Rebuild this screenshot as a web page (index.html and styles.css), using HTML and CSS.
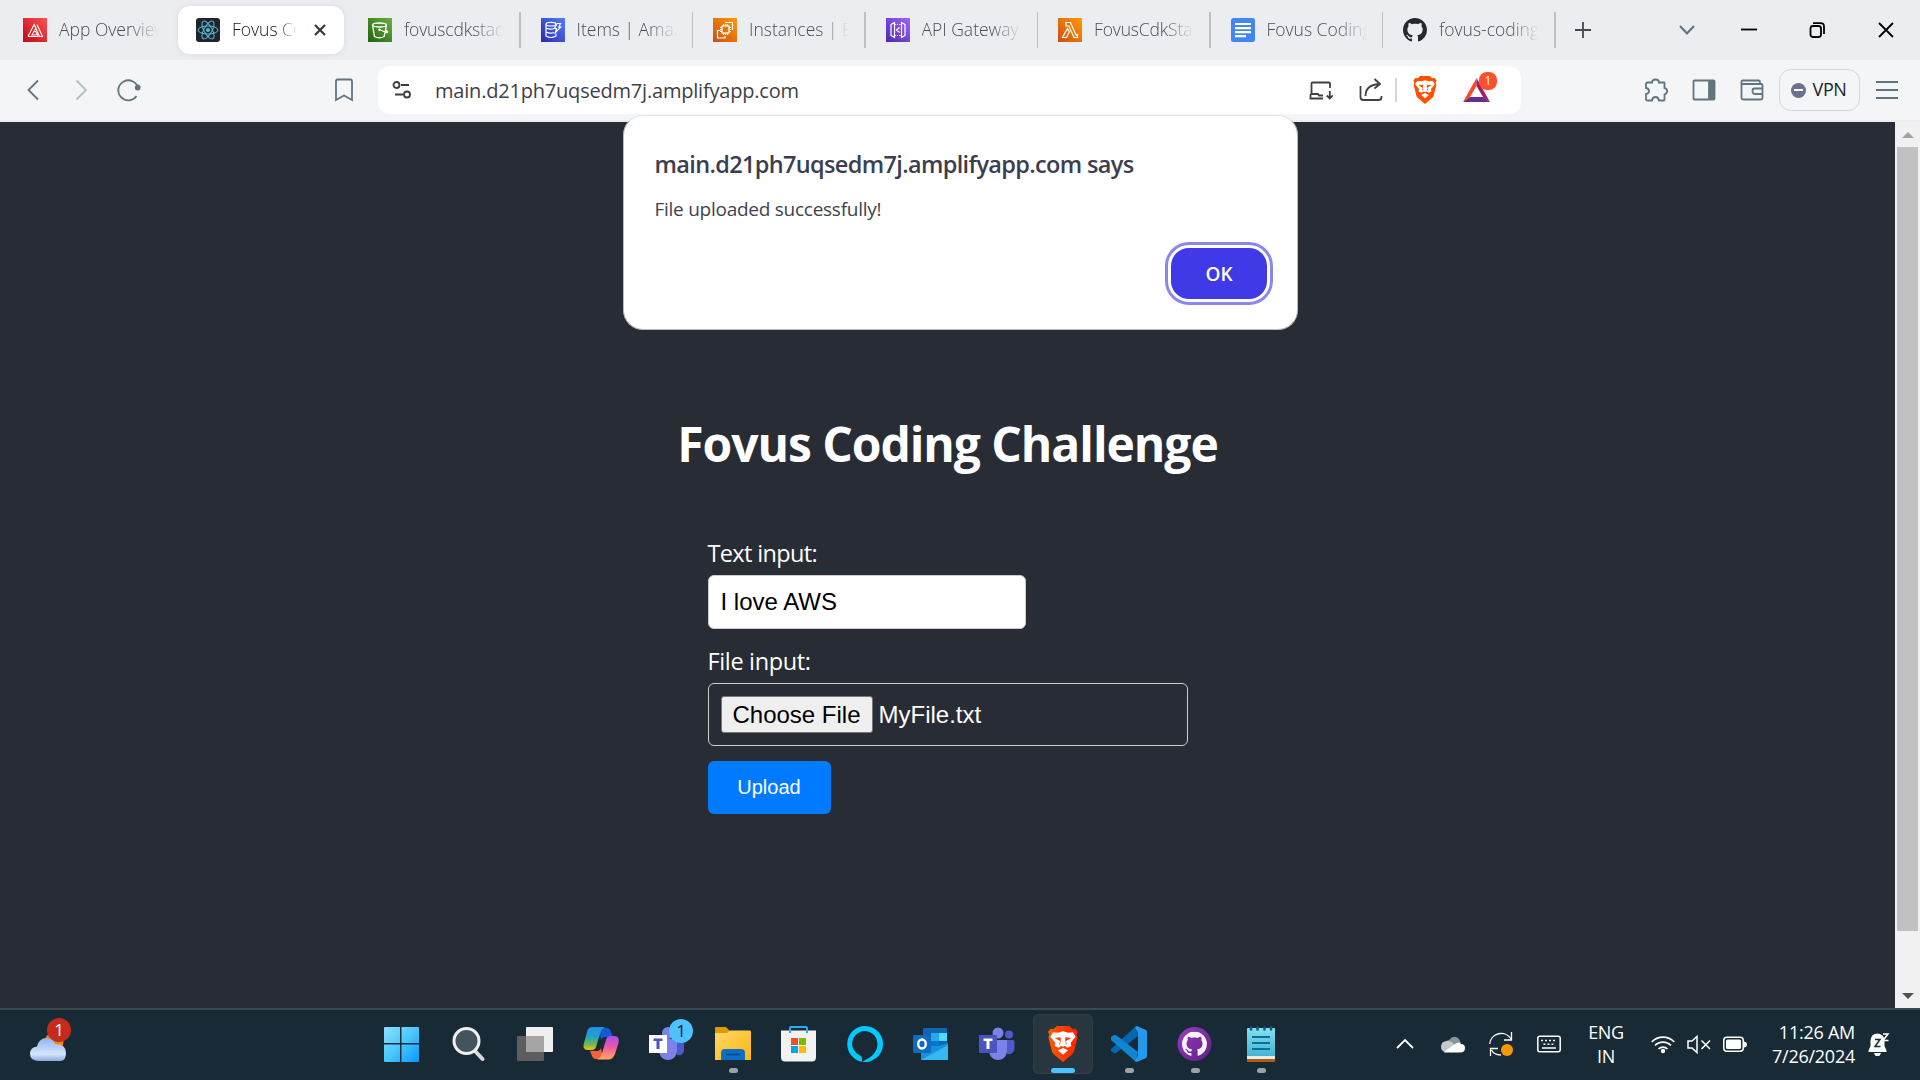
FILE: index.html
```html
<!DOCTYPE html>
<html lang="en">
<head>
<meta charset="utf-8">
<title>Fovus Coding Challenge</title>
<link rel="stylesheet" href="styles.css">
</head>
<body>
<svg class="defs" aria-hidden="true">
  <defs>
    <linearGradient id="g-red" x1="0" y1="1" x2="1" y2="0"><stop offset="0" stop-color="#bd0816"/><stop offset="1" stop-color="#ff5252"/></linearGradient>
    <linearGradient id="g-green" x1="0" y1="1" x2="1" y2="0"><stop offset="0" stop-color="#1b660f"/><stop offset="1" stop-color="#6cae3e"/></linearGradient>
    <linearGradient id="g-blue" x1="0" y1="1" x2="1" y2="0"><stop offset="0" stop-color="#2e27ad"/><stop offset="1" stop-color="#527fff"/></linearGradient>
    <linearGradient id="g-orange" x1="0" y1="1" x2="1" y2="0"><stop offset="0" stop-color="#c8511b"/><stop offset="1" stop-color="#ff9900"/></linearGradient>
    <linearGradient id="g-purple" x1="0" y1="1" x2="1" y2="0"><stop offset="0" stop-color="#4d27a8"/><stop offset="1" stop-color="#a166ff"/></linearGradient>
    <linearGradient id="g-win" x1="0" y1="0" x2="1" y2="1"><stop offset="0" stop-color="#8be0ff"/><stop offset=".5" stop-color="#48c8fb"/><stop offset="1" stop-color="#0c94fb"/></linearGradient>
    <linearGradient id="g-cloud" x1="0" y1="0" x2="0" y2="1"><stop offset="0" stop-color="#8fb2f0"/><stop offset=".7" stop-color="#d5e5fb"/><stop offset="1" stop-color="#8aa8e0"/></linearGradient>
    <linearGradient id="g-cop1" x1="0" y1="0" x2="0" y2="1"><stop offset="0" stop-color="#1f8fe8"/><stop offset=".45" stop-color="#23a5c0"/><stop offset=".75" stop-color="#72b84e"/><stop offset="1" stop-color="#f0c419"/></linearGradient>
    <linearGradient id="g-cop2" x1="0" y1="0" x2="0" y2="1"><stop offset="0" stop-color="#a64df0"/><stop offset=".5" stop-color="#ee5ca0"/><stop offset="1" stop-color="#ffab5c"/></linearGradient>
    <linearGradient id="g-folder" x1="0" y1="0" x2="1" y2="1"><stop offset="0" stop-color="#ffd769"/><stop offset="1" stop-color="#fcb80e"/></linearGradient>
    <linearGradient id="g-lion" x1="0" y1="0" x2="1" y2="0"><stop offset="0" stop-color="#ff5a00"/><stop offset="1" stop-color="#ff2100"/></linearGradient>
    <linearGradient id="g-git" x1="0" y1="0" x2="1" y2="1"><stop offset="0" stop-color="#9a3cc0"/><stop offset="1" stop-color="#5c1f84"/></linearGradient>
    <linearGradient id="g-note" x1="0" y1="0" x2="0" y2="1"><stop offset="0" stop-color="#85e0f0"/><stop offset="1" stop-color="#43b4d4"/></linearGradient>
  </defs>
  <symbol id="lion" viewBox="0 0 90 108">
    <path d="M26 0H64L73 9L82 8L90 17L86 26L89 34L78 77Q76 82 71 86L45 108L19 86Q14 82 12 77L1 34L4 26L0 17L8 8L17 9Z"/>
    <path fill="#fff" d="M15 19L30 20L45 16L60 20L75 19L83 32L68 50L70 60L58 65L50 59L56 55L54 45L70 36L53 34L51 40L53 58L45 62L37 58L39 40L37 34L20 36L36 45L34 55L40 59L32 65L20 60L22 50L7 32Z"/>
    <path fill="#fff" d="M39 36L38 28H52L51 36L53 58L45 61L37 58ZM45 66L60 73L45 86L30 73Z"/>
  </symbol>
  <symbol id="octocat" viewBox="0 0 16 16">
    <path d="M8 0C3.58 0 0 3.58 0 8c0 3.54 2.29 6.53 5.47 7.59.4.07.55-.17.55-.38 0-.19-.01-.82-.01-1.49-2.01.37-2.53-.49-2.69-.94-.09-.23-.48-.94-.82-1.13-.28-.15-.68-.52-.01-.53.63-.01 1.08.58 1.23.82.72 1.21 1.87.87 2.33.66.07-.52.28-.87.51-1.07-1.78-.2-3.64-.89-3.64-3.95 0-.87.31-1.59.82-2.15-.08-.2-.36-1.02.08-2.12 0 0 .67-.21 2.2.82.64-.18 1.32-.27 2-.27s1.36.09 2 .27c1.53-1.04 2.2-.82 2.2-.82.44 1.1.16 1.92.08 2.12.51.56.82 1.27.82 2.15 0 3.07-1.87 3.75-3.65 3.95.29.25.54.73.54 1.48 0 1.07-.01 1.93-.01 2.2 0 .21.15.46.55.38A8.01 8.01 0 0 0 16 8c0-4.42-3.58-8-8-8z"/>
  </symbol>
</svg>

<header class="tabstrip">
  <div class="tab">
    <svg class="favicon" viewBox="0 0 24 24"><path fill="url(#g-red)" d="M0 0h24v24H0z"/><path fill="none" stroke="#fff" stroke-width="1.1" d="M5 18.5L11.2 6.5L13 10L9 17H14.5L11.5 11.5M14 6.5L19.5 18.5H16.5L12.2 9M5 18.5H15.5"/></svg>
    <span class="tab-title">App Overview</span>
  </div>
  <div class="tab tab-active">
    <svg class="favicon" viewBox="0 0 24 24"><rect width="24" height="24" rx="3" fill="#20232a"/><g fill="none" stroke="#53c1de" stroke-width="1"><ellipse cx="12" cy="12" rx="10" ry="4"/><ellipse cx="12" cy="12" rx="10" ry="4" transform="rotate(60 12 12)"/><ellipse cx="12" cy="12" rx="10" ry="4" transform="rotate(120 12 12)"/></g><circle cx="12" cy="12" r="2" fill="#53c1de"/></svg>
    <span class="tab-title">Fovus Coding</span>
    <svg class="tab-close" viewBox="0 0 12 12"><path d="M1 1L11 11M11 1L1 11"/></svg>
  </div>
  <div class="tab">
    <svg class="favicon" viewBox="0 0 24 24"><path fill="url(#g-green)" d="M0 0h24v24H0z"/><g fill="none" stroke="#fff" stroke-width="1.3"><ellipse cx="11.5" cy="7" rx="7" ry="2"/><path d="M4.500 7L6.500 18.500Q11.500 21 16.200 18.500L18.500 7M11.500 11.500L18 14.500Q20.500 15 19 13L17.500 12"/></g><circle cx="11.500" cy="11.800" r="1.200" fill="#fff"/></svg>
    <span class="tab-title tight">fovuscdkstack</span><i class="sep"></i>
  </div>
  <div class="tab">
    <svg class="favicon" viewBox="0 0 24 24"><path fill="url(#g-blue)" d="M0 0h24v24H0z"/><g fill="none" stroke="#fff" stroke-width="1.200"><ellipse cx="10" cy="6.200" rx="5" ry="1.800"/><path d="M5 6.200V18Q10 21 15 18V15.500M5 10Q9 12 13 10.500M5 14Q9 16 13.500 14.500M16 5.500H19.500L17.800 9H19.800L14.500 14.500L15.500 10.500H13.500Z"/></g></svg>
    <span class="tab-title">Items | Amazon</span><i class="sep"></i>
  </div>
  <div class="tab">
    <svg class="favicon" viewBox="0 0 24 24"><path fill="url(#g-orange)" d="M0 0h24v24H0z"/><g fill="none" stroke="#fff" stroke-width="1.200"><rect x="9" y="8" width="7" height="7"/><path d="M10.500 6V8M12.500 6V8M14.500 6V8M10.500 15v2M12.500 15v2M14.500 15v2M7 9.500h2M7 11.500h2M7 13.500h2M16 9.500h2M16 11.500h2M16 13.500h2M12 4.500H19.500V12M7.500 12.500H4.500V20H12V18"/></g></svg>
    <span class="tab-title">Instances | EC2</span><i class="sep"></i>
  </div>
  <div class="tab">
    <svg class="favicon" viewBox="0 0 24 24"><path fill="url(#g-purple)" d="M0 0h24v24H0z"/><g fill="none" stroke="#fff" stroke-width="1.200"><path d="M5 6.500L8.500 4.500V19.500L5 17.500ZM19 6.500L15.500 4.500V19.500L19 17.500ZM13.500 9.500L10.500 12L13.500 14.500"/><path stroke-dasharray="1.200 1.200" d="M8.500 6.500h7M8.500 17.500h7"/></g></svg>
    <span class="tab-title">API Gateway</span><i class="sep"></i>
  </div>
  <div class="tab">
    <svg class="favicon" viewBox="0 0 24 24"><path fill="url(#g-orange)" d="M0 0h24v24H0z"/><path fill="none" stroke="#fff" stroke-width="1.200" d="M8 4.500H12.500L18 17L19.500 16.500V19.500H16L10.800 8H8ZM9.500 10.500L11.300 14L8.500 19.500H4.500Z"/></svg>
    <span class="tab-title tight">FovusCdkStack</span><i class="sep"></i>
  </div>
  <div class="tab">
    <svg class="favicon" viewBox="0 0 24 24"><rect width="24" height="24" rx="2.500" fill="#4285f4"/><path stroke="#fff" stroke-width="2.200" d="M4 6H20M4 10.200H20M4 14.200H20M4 18.200H15"/></svg>
    <span class="tab-title">Fovus Coding</span><i class="sep"></i>
  </div>
  <div class="tab">
    <svg class="favicon" fill="#24292f"><use href="#octocat"/></svg>
    <span class="tab-title">fovus-coding-</span><i class="sep"></i>
  </div>
  <svg class="new-tab" viewBox="0 0 16 16"><path d="M8 0V16M0 8H16"/></svg>
  <div class="window-controls">
    <svg class="tab-search" viewBox="0 0 16 16"><path d="M1 4L8 11.500L15 4"/></svg>
    <svg viewBox="0 0 16 16"><path d="M0 7.500H16"/></svg>
    <svg viewBox="0 0 16 16"><rect x="1.500" y="4" width="10.500" height="11" rx="2.500"/><path d="M4 1.200H11.500Q15 1.200 15 4.500V12"/></svg>
    <svg viewBox="0 0 16 16"><path d="M1 1L15 15M15 1L1 15"/></svg>
  </div>
</header>

<nav class="toolbar">
  <div class="nav-buttons">
    <svg viewBox="0 0 24 24"><path d="M17 2.500L7.500 12L17 21.500"/></svg>
    <svg class="disabled" viewBox="0 0 24 24"><path d="M7.500 2.500L17 12L7.500 21.500"/></svg>
    <svg viewBox="0 0 24 24"><path d="M21 10A10 10 0 1 0 19.500 18"/><circle cx="20.700" cy="9.500" r="2" fill="#62757e"/></svg>
  </div>
  <svg class="bookmark" viewBox="0 0 24 24"><path d="M4 3Q4 1.500 5.500 1.500H18.500Q20 1.500 20 3V22L12 17.500L4 22Z"/></svg>
  <div class="address">
    <svg class="tune" viewBox="0 0 20 20"><circle cx="4.500" cy="5" r="3"/><path d="M9 5H17M3 14.500H11"/><circle cx="15" cy="14.500" r="3"/></svg>
    <span class="url">main.d21ph7uqsedm7j.amplifyapp.com</span>
    <svg class="act install" viewBox="0 0 24 24"><path d="M14 20.500H1.500V17L2.500 15.500V5.500Q2.500 4.500 3.500 4.500H20Q21 4.500 21 5.500V10M2.500 16H9L10 17.500H14M20.800 13V20M17.800 17.500L20.800 20.500L23.800 17.500"/></svg>
    <svg class="act share" viewBox="0 0 24 24"><path d="M1.500 8V19Q1.500 22 4.500 22H19.500Q22.500 22 22.500 19V18M6.500 18Q6.500 7 20 6M15.500 1L21 6L15.500 10.500"/></svg>
    <i class="bar-divider"></i>
    <svg class="shield" fill="#fb542b"><use href="#lion"/></svg>
    <div class="rewards">
      <svg viewBox="0 0 27 24"><path fill="#ff4724" d="M13.500 0V8L7 19L0 24Z"/><path fill="#9e1f63" d="M13.500 0V8L20 19L27 24Z"/><path fill="#662d91" d="M0 24L7 19H20L27 24Z"/></svg>
      <b class="reward-badge">1</b>
    </div>
  </div>
  <div class="extensions">
    <svg viewBox="0 0 24 24"><path d="M3.500 4.500H8Q8 1.500 11.500 1.500T15 4.500H20Q20.500 4.500 20.500 5V10Q23.200 10.500 23.200 13T20.500 16.500V21.500Q20.500 22.500 19.500 22.500H15Q14.500 19 11.500 19T8 22.500H3.500Q2 22.500 2 21V16Q5 15.500 5 13T2 10V6Q2 4.500 3.500 4.500Z"/></svg>
    <svg viewBox="0 0 24 24"><rect x="1.500" y="2.500" width="21" height="19" rx="1"/><path fill="#62757e" d="M17 3h5v18h-5z"/></svg>
    <svg viewBox="0 0 24 24"><path d="M1.500 3.500V20Q1.500 21.500 3 21.500H21Q22.500 21.500 22.500 20V7.500Q22.500 6 21 6H3Q1.500 6 1.500 4.200T3 2.500H18.500Q20 2.500 20 4V6M22.500 10.500H14.500Q12.500 10.500 12.500 13T14.500 16H22.500"/></svg>
  </div>
  <div class="vpn"><i class="vpn-dot"></i><span>VPN</span></div>
  <svg class="menu" viewBox="0 0 24 24"><path d="M1 4H23M1 12H23M1 20H23"/></svg>
</nav>

<div class="viewport">
  <main class="page">
    <h1 class="title">Fovus Coding Challenge</h1>
    <form class="form">
      <label class="label label-text" for="txt">Text input:</label>
      <input class="text-input" id="txt" type="text" value="I love AWS">
      <div class="label">File input:</div>
      <div class="file-input"><button class="choose" type="button">Choose File</button><span>MyFile.txt</span></div>
      <button class="upload" type="button">Upload</button>
    </form>
  </main>
  <div class="scrollbar"><i class="arrow-up"></i><i class="thumb"></i><i class="arrow-down"></i></div>
</div>

<div class="dialog" role="alertdialog">
  <h2 class="dialog-title">main.d21ph7uqsedm7j.amplifyapp.com says</h2>
  <p class="dialog-text">File uploaded successfully!</p>
  <button class="ok" type="button">OK</button>
</div>

<footer class="taskbar">
  <div class="weather">
    <svg viewBox="0 0 36 28"><circle cx="24" cy="9" r="9.500" fill="#f5820b"/><path fill="url(#g-cloud)" d="M9 28Q0 28 0 21T7 13.500Q9 5 16.500 5T25 11Q36 11 36 20T28 28Z"/></svg>
    <b class="weather-badge">1</b>
  </div>
  <div class="apps">
    <div class="app"><svg class="start" viewBox="0 0 36 36"><path fill="url(#g-win)" d="M1 1H16V17H0V2Q0 1 1 1ZM17.500 1H34Q35 1 35 2V17H17.500ZM0 18.500H16V36H1Q0 36 0 35ZM17.500 18.500H35V35Q35 36 34 36H17.500Z"/></svg></div>
    <div class="app"><svg viewBox="0 0 36 36"><path stroke="#d9dadb" stroke-width="4" stroke-linecap="round" d="M24 25L31.500 33"/><circle cx="15.500" cy="15" r="12.500" fill="#43545d" stroke="#f0f0f0" stroke-width="3"/></svg></div>
    <div class="app"><svg viewBox="0 0 36 36"><rect x="9" y="1" width="27" height="25" rx="1" fill="#efefef"/><rect y="10" width="27" height="25" rx="1" fill="#5d5d5d"/><path fill="#a5a5a5" d="M9 10h18v16H9z"/></svg></div>
    <div class="app"><svg viewBox="0 0 36 36"><path fill="#1458d4" d="M16 2H24Q27 2 28 6L30 11H22Q19 11 18 14Z"/><path fill="#f4633c" d="M7 25H14Q17 25 18 22L20 33H13Q10 33 9 30Z"/><path fill="url(#g-cop1)" d="M9 1H22Q18 3 17 8L13 21Q12 24 9 24H5Q-1 24 1 17L4 6Q5 1 9 1Z"/><path fill="url(#g-cop2)" d="M27 10H31Q37 10 35.500 17L32 28Q30 33.500 25 33.500H14Q18 32 19 27L23 14Q24 10 27 10Z"/></svg></div>
    <div class="app app-badged"><svg viewBox="0 0 36 36"><circle cx="19" cy="7" r="6" fill="#7b83eb"/><path fill="#5059c9" d="M25 12h10V25Q34 30 28 29Z"/><path fill="#7b83eb" d="M10 13H28V26Q26 34 19 34T10 26Z"/><path fill="#fff" d="M0 9h18v18H0z"/><path fill="#4b53bc" d="M4.500 12.500h9v2.600H10.500V23H7.500V15.100H4.500Z"/></svg><b class="app-count">1</b></div>
    <div class="app app-open"><svg viewBox="0 0 36 36"><path fill="#dc9b06" d="M0 2Q0 1 1 1H11L15 5V9H0Z"/><path fill="url(#g-folder)" d="M0 7H12L15 4.500H35Q36 4.500 36 6V34H0Z"/><path fill="#0c6fc4" d="M6 34V27Q6 23 10 23H26Q30 23 30 27V34Z"/><path stroke="#074a90" stroke-width="1.800" d="M11 28.500H25"/></svg></div>
    <div class="app"><svg viewBox="0 0 36 36"><path fill="#f2f2f2" d="M0 4.500H35V31Q35 35.500 31 35.500H4Q0 35.500 0 31Z"/><path fill="none" stroke="#28afea" stroke-width="2" d="M9 7V2Q9 1 10 1H25Q26 1 26 2V7"/><path fill="#f25022" d="M10 12h7v7h-7z"/><path fill="#7fba00" d="M18 12h7v7h-7z"/><path fill="#00a4ef" d="M10 20h7v7h-7z"/><path fill="#ffb900" d="M18 20h7v7h-7z"/></svg></div>
    <div class="app"><svg viewBox="0 0 36 36"><path fill="#00caff" d="M18 0A18 18 0 0 0 15 35.700V32.500Q15 30.500 13 29.500A12.700 12.700 0 1 1 30.500 18Q30.500 27 21 32.500Q18.500 34 15.300 35.800A18 18 0 1 0 18 0Z"/></svg></div>
    <div class="app"><svg viewBox="0 0 36 36"><path fill="#1066b5" d="M11 2H33Q34 2 34 3V20H10V3Z"/><path fill="#28a8ea" d="M18 7h8v8h-8z"/><path fill="#50d9ff" d="M26 7h8v8h-8z"/><path fill="#0078d4" d="M18 15h8v6h-8z"/><path fill="#1490df" d="M8 20H26L35 17V34H8Z"/><path fill="#35b8f1" d="M8 34L35 19V33Q35 34 34 34Z"/><rect y="9" width="18" height="18" rx="1" fill="#0f6cbd"/><ellipse cx="9" cy="18" rx="3.800" ry="4.500" fill="none" stroke="#fff" stroke-width="2.400"/></svg></div>
    <div class="app"><svg viewBox="0 0 36 36"><circle cx="19" cy="7" r="5.500" fill="#7b83eb"/><circle cx="30" cy="8.500" r="4" fill="#5059c9"/><path fill="#5059c9" d="M24 14H34Q35.500 14 35.500 16V22Q35 29 28 28Z"/><path fill="#7b83eb" d="M11 14H28V26Q26 34 19 34T10 26Z"/><rect y="9" width="18" height="18" rx="1" fill="#4b53bc"/><path fill="#fff" d="M4.500 12.500h9v2.600H10.500V23H7.500V15.100H4.500Z"/></svg></div>
    <div class="app app-active"><svg class="lion-app" fill="url(#g-lion)"><use href="#lion"/></svg></div>
    <div class="app app-open"><svg viewBox="0 0 36 36"><path fill="#0067b0" d="M0 23L24 1L27 10L5 27Q3 28 0 25Z"/><path fill="#1186cf" d="M0 13V11L3 9H5L27 26L25 36L0 14Z"/><path fill="#2499ec" d="M26 0L35 4Q36 5 36 6V30Q36 31 35 32L26 36Q24 36 24 34L27 30V7L24 2Q24 0 26 0Z"/></svg></div>
    <div class="app app-open"><svg viewBox="0 0 36 36"><circle cx="17.500" cy="18" r="17" fill="url(#g-git)"/><svg x="5" y="5.500" width="25" height="25" fill="#f7f2fa"><use href="#octocat"/></svg></svg></div>
    <div class="app app-open"><svg viewBox="0 0 36 36"><path fill="#b05a12" d="M4 32h28v4H4z"/><path fill="#e9e9e9" d="M4 29h28v4H4z"/><path fill="url(#g-note)" d="M4 3Q4 2 5 2H31Q32 2 32 3V30H4Z"/><path stroke="#0d6f96" stroke-width="1.800" d="M9 11H27M9 17H27M9 23H27"/><path stroke="#0b5f7e" stroke-width="2.600" stroke-linecap="round" d="M8 1.500V3.500M14.500 1.500V3.500M21.500 1.500V3.500M28 1.500V3.500"/></svg></div>
  </div>
  <div class="tray">
    <svg class="cell-s" viewBox="0 0 24 24"><path fill="none" stroke="#fff" stroke-width="1.800" d="M4 16L12 8L20 16"/></svg>
    <svg class="cell-m" viewBox="0 0 24 24"><path fill="#8a949a" d="M2 15Q3 9 8 8Q13 2 18 7L20 11L12 16Z"/><path fill="#c3c9cc" d="M0 15Q0 9 6 9Q12 8 14 15L10 20H4Q0 19 0 15Z"/><path fill="#fff" d="M3 20L14 12Q18 9 20 12Q24 12 24 16T20 20.500H5Q3 20.500 3 20Z"/></svg>
    <svg class="cell-m" viewBox="0 0 24 24"><path fill="none" stroke="#fff" stroke-width="1.300" d="M.7 12A11.500 11.500 0 0 1 22 7M22.500 0V8H15M1.500 24V16.500H9M2.500 18Q5 23 12 23"/><circle cx="18" cy="18" r="6" fill="#ff9800"/></svg>
    <svg class="cell-m" viewBox="0 0 24 24"><rect x=".8" y="4.300" width="22.400" height="15.500" rx="2" fill="none" stroke="#fff" stroke-width="1.500"/><path stroke="#fff" stroke-width="1.500" stroke-dasharray="2 2" d="M4 8.500H20M6.500 12.200H18"/><path stroke="#fff" stroke-width="1.500" d="M5 16H19"/></svg>
    <div class="lang"><span>ENG</span><span>IN</span></div>
    <svg class="cell-s" viewBox="0 0 24 24"><g fill="none" stroke="#fff" stroke-width="1.700"><path d="M.7 10A15.500 15.500 0 0 1 23.300 10M4 13.500A11 11 0 0 1 20 13.500M7.500 17A6.500 6.500 0 0 1 16.500 17"/></g><circle cx="12" cy="19" r="2.200" fill="#fff"/></svg>
    <svg class="cell-s" viewBox="0 0 24 24"><path fill="none" stroke="#fff" stroke-width="1.500" d="M1 9H5L10 4.500V20.500L5 16H1ZM14.500 8.500L23 17M23 8.500L14.500 17"/></svg>
    <svg class="cell-s" viewBox="0 0 24 24"><rect x=".8" y="5.300" width="19.400" height="14" rx="3" fill="none" stroke="#fff" stroke-width="1.500"/><rect x="3" y="7.500" width="15" height="9.600" rx="1.500" fill="#fff"/><path fill="#fff" d="M21 9.500Q24 10 24 12.500T21 15.500Z"/></svg>
    <div class="clock"><span>11:26 AM</span><span>7/26/2024</span></div>
    <svg class="bell" viewBox="0 0 24 24"><path fill="#fff" d="M1.500 18.500L3.500 14V8.500Q4 1.500 10.500 1.500Q17 2 17.500 8.500V14L19.500 18.500V20H1.500ZM7 21H14Q13 24.500 10.500 24.500T7 21Z"/><path fill="none" stroke="#1a2b36" stroke-width="1.500" d="M8 7.500H13L8 14.500H13.500"/><path fill="none" stroke="#fff" stroke-width="1.500" d="M16 2H21L16 8.500H21.500"/></svg>
  </div>
</footer>
</body>
</html>
```
FILE: styles.css
```css
* { box-sizing: border-box; }

body {
  margin: 0;
  width: 1920px;
  height: 1080px;
  overflow: hidden;
  display: flex;
  flex-direction: column;
  position: relative;
  background: #282c34;
  font-family: "Open Sans", "Noto Sans", sans-serif;
}

svg { display: block; flex: none; }
button { font: inherit; }
.defs { position: absolute; width: 0; height: 0; }

/* Tab strip */
.tabstrip {
  height: 60px;
  flex: none;
  display: flex;
  align-items: center;
  padding-left: 5px;
  background: #ecedf1;
}
.tab {
  width: 172.5px;
  height: 48px;
  flex: none;
  display: flex;
  align-items: center;
  padding-left: 18px;
}
.tab-active {
  width: 166px;
  margin-right: 6px;
  margin-left: .5px;
  border-radius: 12px;
  background: #fff;
  box-shadow: 0 0 6px rgba(0, 0, 0, .08);
}
.favicon { width: 24px; height: 24px; }
.tab-title {
  width: 100px;
  margin-left: 12px;
  overflow: hidden;
  white-space: nowrap;
  font-size: 17.5px;
  font-weight: 300;
  line-height: 23px;
  height: 24px;
  color: #4b4e55;
  -webkit-mask-image: linear-gradient(to right, #000 70%, transparent);
  mask-image: linear-gradient(to right, #000 70%, transparent);
}
.tight { letter-spacing: -.15px; }
.tab-active .tab-title { width: 65px; color: #14161f; }
.tab-close { width: 12px; height: 12px; margin-left: 17px; fill: none; stroke: #333740; stroke-width: 2.2; }
.sep { width: 1.5px; height: 36px; margin-left: auto; margin-right: 2px; background: #bfc0c2; }
.new-tab { width: 16px; height: 16px; margin-left: 17px; fill: none; stroke: #45484d; stroke-width: 1.8; }
.window-controls { display: flex; gap: 52.5px; margin-left: auto; margin-right: 26.5px; }
.window-controls svg { width: 16px; height: 16px; fill: none; stroke: #000; stroke-width: 1.8; }
.window-controls .tab-search { stroke: #62757e; stroke-width: 2.2; margin-right: -7px; }

/* Toolbar */
.toolbar {
  height: 62px;
  flex: none;
  display: flex;
  align-items: center;
  background: #f3f5f7;
  border-bottom: 2px solid #ecedf1;
}
.toolbar svg { fill: none; stroke: #62757e; stroke-width: 1.8; width: 24px; height: 24px; }
.nav-buttons { display: flex; gap: 24px; padding-left: 21px; }
.toolbar .disabled { stroke: #b5bfc4; }
.bookmark { margin-left: 190.5px; }
.address {
  width: 1143px;
  height: 48px;
  margin-left: 22.5px;
  padding: 0 23px 0 14px;
  display: flex;
  align-items: center;
  border-radius: 12px;
  background: #fff;
}
.toolbar .tune { width: 20px; height: 20px; stroke: #3a3c40; }
.url { margin-left: 23px; margin-right: auto; padding-top: 1px; font-size: 20px; line-height: 28px; letter-spacing: -.2px; color: #3f4145; }
.toolbar .act { stroke: #3f4145; margin-right: 26px; }
.toolbar .share { margin-right: 12px; }
.bar-divider { width: 2px; height: 24px; background: #d4d5d8; }
.toolbar .shield { width: 24px; height: 28px; margin-left: 16px; fill: #ff5000; stroke: none; }
.rewards { position: relative; margin-left: 26px; margin-right: 8px; }
.rewards svg { width: 27px; height: 24px; stroke: none; }
.reward-badge {
  position: absolute;
  left: 16px;
  top: -6px;
  width: 18px;
  height: 18px;
  border-radius: 8px;
  background: #ff4f2b;
  color: #fff;
  font-size: 12px;
  font-weight: 400;
  line-height: 18px;
  text-align: center;
}
.extensions { display: flex; gap: 24.3px; margin-left: 122.5px; }
.vpn {
  width: 81px;
  height: 42px;
  margin-left: 15px;
  padding-left: 11px;
  display: flex;
  align-items: center;
  gap: 6.5px;
  border: 1.5px solid #d0d9de;
  border-radius: 12px;
  font-size: 18px;
  letter-spacing: -.4px;
  line-height: 24px;
  color: #1e2128;
}
.vpn span { margin-top: -2px; }
.vpn-dot { width: 15px; height: 15px; border-radius: 50%; background: linear-gradient(#fff, #fff) center / 9px 2px no-repeat #6b7094; }
.menu { margin-left: 15px; }

/* Web page */
.viewport { height: 886px; flex: none; display: flex; }
.page { flex: 1; padding-top: 283px; background: #282c34; color: #fff; }
.title { margin: 0; font-size: 48px; font-weight: 700; line-height: 77px; letter-spacing: -1.05px; text-align: center; }
.form { width: 480px; margin: 55px auto 0; display: flex; flex-direction: column; align-items: flex-start; }
.label { font-size: 23.5px; line-height: 32px; height: 32px; letter-spacing: -.35px; margin-bottom: 6px; white-space: nowrap; }
.label-text { letter-spacing: -.65px; }
.text-input {
  width: 318px;
  height: 54px;
  margin: 0 0 16px;
  padding: 0 12px;
  border: 1px solid #ccc;
  border-radius: 6px;
  font: 24px "Liberation Sans", sans-serif;
  color: #000;
}
.file-input {
  width: 480px;
  height: 63px;
  padding: 0 12px;
  display: flex;
  align-items: center;
  gap: 6px;
  border: 1px solid #ccc;
  border-radius: 6px;
  font: 24px "Liberation Sans", sans-serif;
}
.choose {
  width: 152px;
  height: 37px;
  padding: 0;
  border: 1px solid #767676;
  border-radius: 3px;
  background: #efefef;
  color: #000;
}
.upload {
  width: 123px;
  height: 53px;
  margin-top: 15px;
  border: 0;
  border-radius: 6px;
  background: #007bff;
  color: #fff;
  font: 20px "Liberation Sans", sans-serif;
}
.scrollbar { width: 25px; display: flex; flex-direction: column; align-items: center; background: #f1f1f1; padding: 10px 0 9px; }
.arrow-up, .arrow-down { border: 6px solid transparent; }
.arrow-up { border-top: 0; border-bottom-color: #a3a3a3; }
.arrow-down { border-bottom: 0; border-top-color: #505050; margin-top: auto; }
.thumb { width: 21px; height: 784px; margin-top: 9px; background: #c1c1c1; }

/* Alert dialog floating over the page */
.dialog {
  position: absolute;
  left: 623px;
  top: 115px;
  width: 675px;
  height: 215px;
  padding: 30px 30.5px 0;
  display: flex;
  flex-direction: column;
  border: 1px solid #b9bbbe;
  border-top-color: #e4e5e8;
  border-radius: 20px;
  background: #fff;
}
.dialog-title { margin: 0; font-size: 23.5px; font-weight: 600; line-height: 36px; letter-spacing: -.65px; color: #3b3e4f; white-space: nowrap; }
.dialog-text { margin: 13px 0 0; font-size: 19px; line-height: 28px; letter-spacing: -.26px; color: #3f4250; white-space: nowrap; }
.ok {
  align-self: flex-end;
  width: 96px;
  height: 51px;
  margin-top: 25px;
  margin-right: -.5px;
  padding: 1px 0 0;
  border: 0;
  border-radius: 18px;
  background: #3f39e8;
  outline: 3px solid #8b87f1;
  outline-offset: 3px;
  color: #fff;
  font-size: 19px;
  font-weight: 600;
}

/* Taskbar */
.taskbar { height: 72px; flex: none; display: flex; border-top: 2px solid #3b4951; background: #182a35; color: #fff; }
.weather { position: relative; width: 370px; padding: 23px 0 0 30px; }
.weather svg { width: 36px; height: 28px; }
.weather-badge, .app-count {
  position: absolute;
  width: 24px;
  height: 24px;
  border-radius: 50%;
  font-size: 17px;
  font-weight: 400;
  line-height: 24px;
  text-align: center;
}
.weather-badge { left: 47px; top: 8px; background: #c42b1c; }
.app-count { top: 5px; background: #4cc2ff; color: #10242e; }
.apps { display: flex; padding: 4px 3px 0; gap: 6px; }
.app { width: 60px; height: 60px; padding: 12px 12px 0; display: flex; flex-direction: column; align-items: center; border-radius: 6px; }
.app svg { width: 36px; height: 36px; }
.app .start { margin-left: -2px; }
.app svg svg { width: 25px; height: 25px; }
.app .lion-app { width: 30px; height: 36px; }
.app-badged { position: relative; overflow: visible; }
.app-badged .app-count { left: 32px; }
.app-open::after, .app-active::after { content: ""; flex: none; width: 9px; height: 5px; margin-top: 6px; border-radius: 3px; background: #9aa3a8; }
.app-active { background: #27363f; box-shadow: inset 0 0 0 1px #313f48; }
.app-active::after { width: 24px; background: #4cc2ff; }
.tray { margin-left: auto; padding-right: 27px; display: flex; align-items: center; height: 68px; }
.tray svg { height: 24px; }
.cell-s { width: 24px; margin: 0 6px; }
.cell-m { width: 24px; margin: 0 12px; }
.tray .cell-s + .cell-m { margin-left: 18px; }
.lang, .clock { display: flex; flex-direction: column; font-size: 18px; line-height: 24px; letter-spacing: -.35px; padding-bottom: 1px; }
.lang { width: 66px; align-items: center; margin-right: 6px; }
.clock { width: 102px; align-items: flex-end; letter-spacing: -.25px; }
.bell { width: 24px; margin: 0 2px 0 12px; }
```
